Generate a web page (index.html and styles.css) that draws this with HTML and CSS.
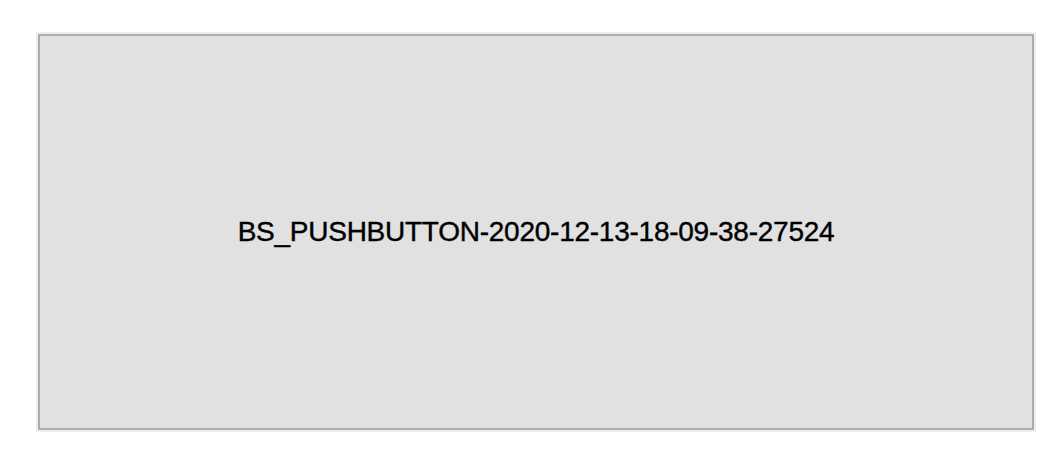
FILE: index.html
```html
<!DOCTYPE html>
<html>
<head>
<meta charset="utf-8">
<link rel="stylesheet" href="styles.css">
</head>
<body>
<div class="page">
  <div class="ring">
    <button class="btn">BS_PUSHBUTTON-2020-12-13-18-09-38-27524</button>
  </div>
</div>
</body>
</html>
```
FILE: styles.css
```css
html, body {
  margin: 0;
  padding: 0;
  background: #ffffff;
}
.page {
  width: 1050px;
  height: 450px;
  padding: 32px 0 0 36px;
  box-sizing: border-box;
}
.ring {
  width: 1000px;
  height: 400px;
  box-sizing: border-box;
  border: 2px solid #efefef;
  display: flex;
}
.btn {
  flex: 1;
  margin: 0;
  padding: 0;
  background: #e1e1e1;
  border: 2px solid #adadad;
  font-family: "Liberation Sans", Arial, sans-serif;
  font-size: 28px;
  letter-spacing: -0.25px;
  -webkit-text-stroke: 0.4px #000000;
  color: #000000;
  display: flex;
  align-items: center;
  justify-content: center;
  line-height: 1;
}
```
